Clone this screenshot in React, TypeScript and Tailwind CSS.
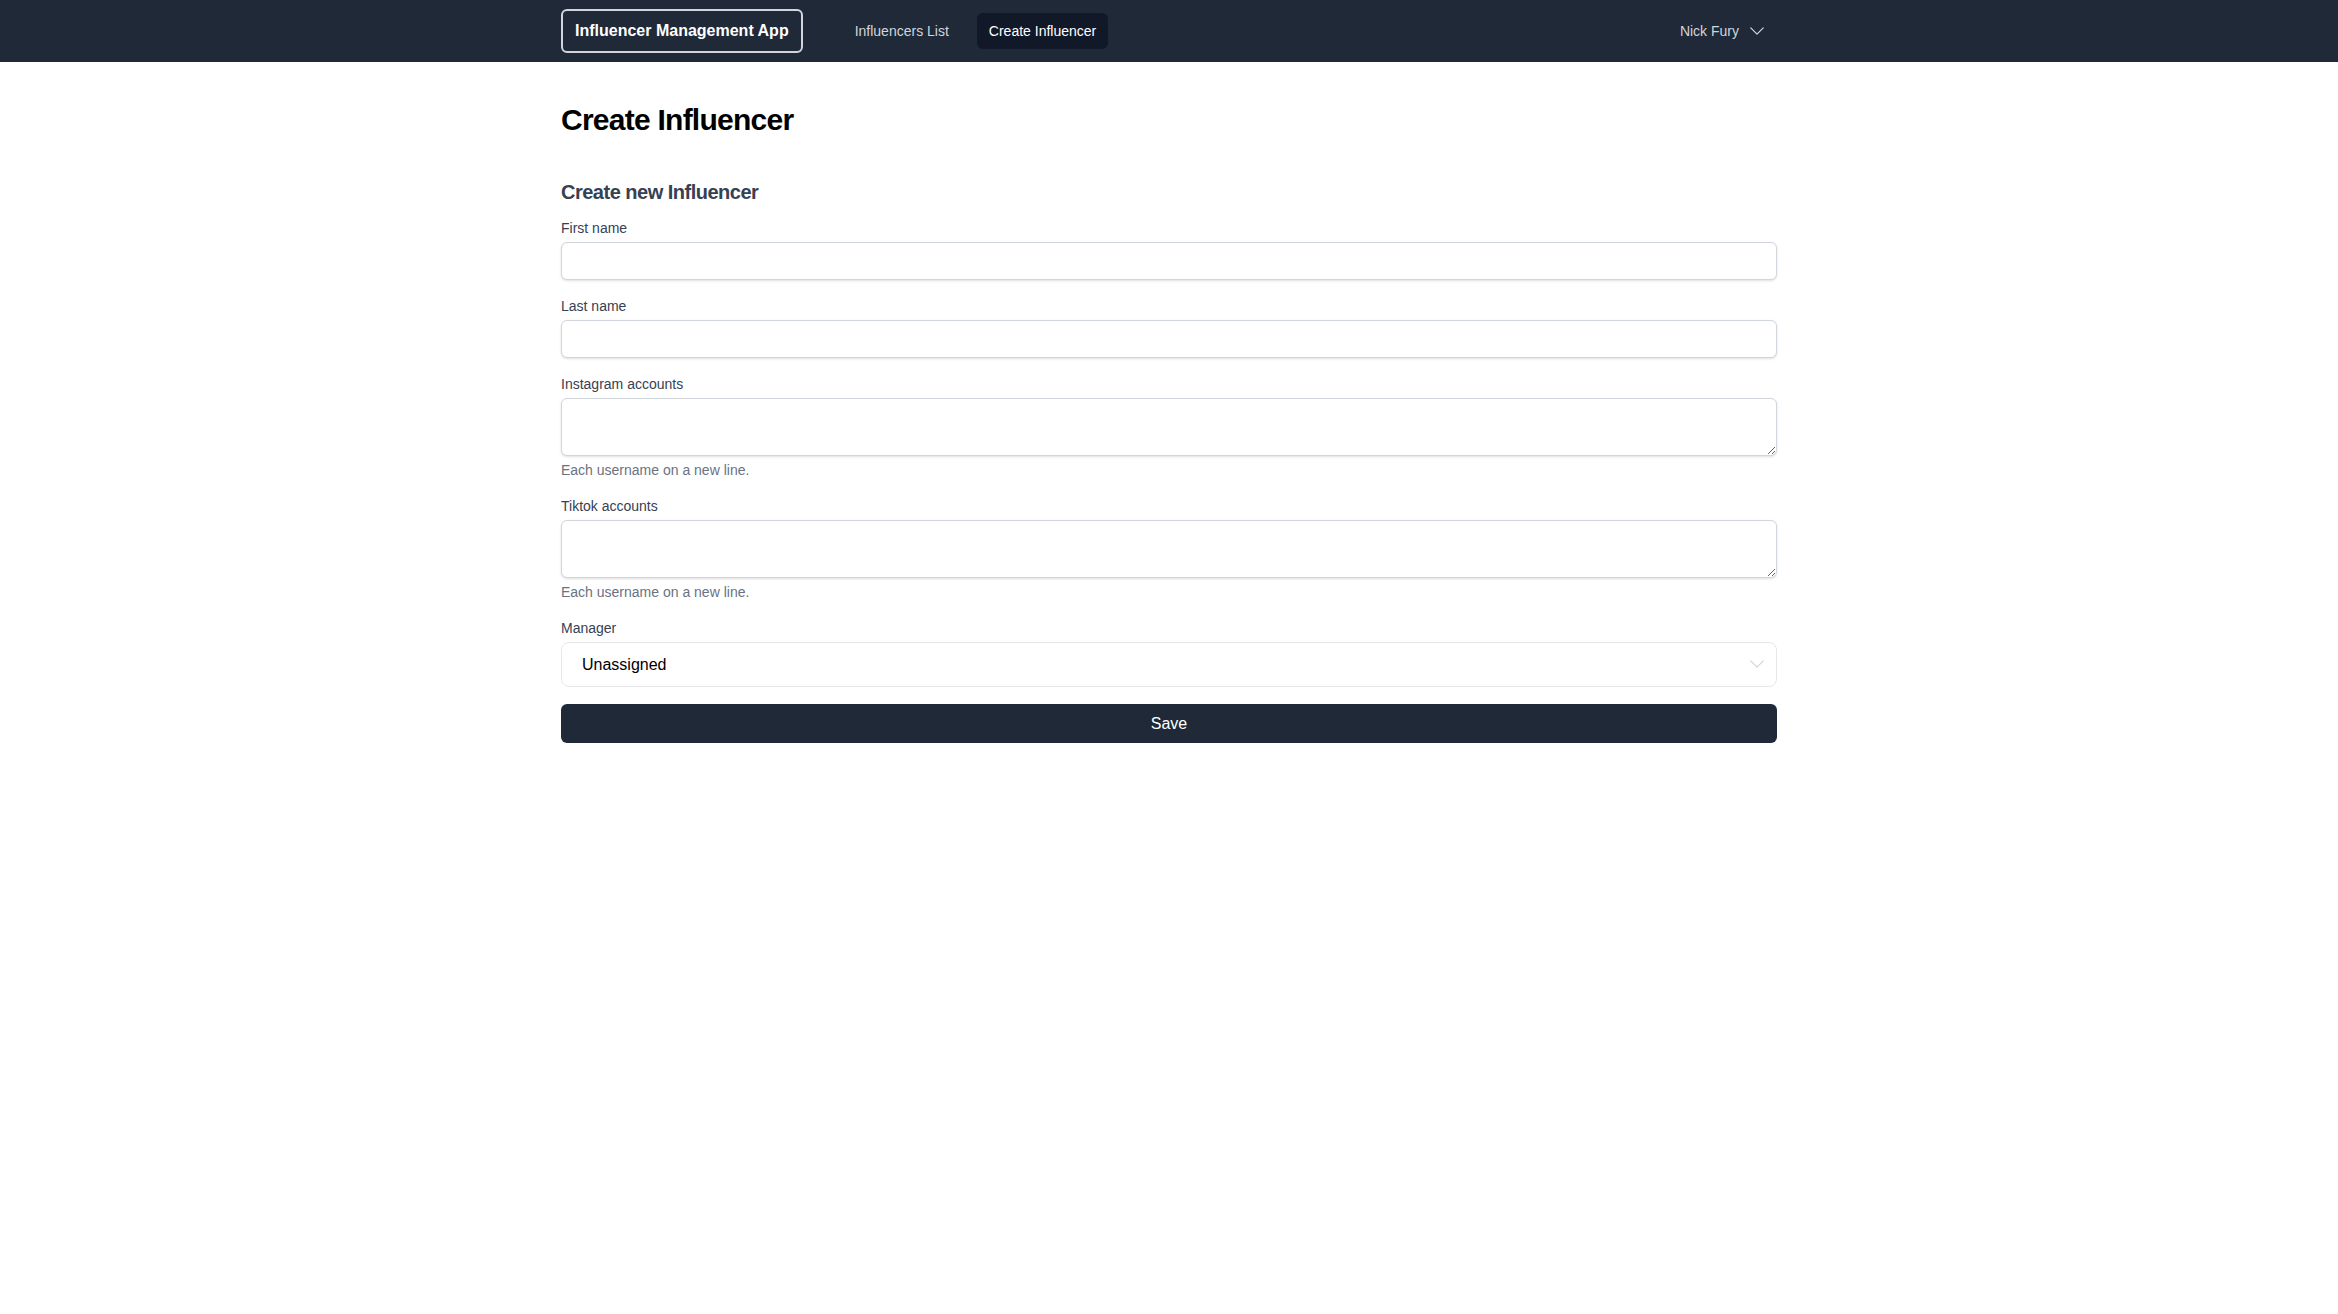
import React from 'react';

const font = { fontFamily: '"Liberation Sans", Arial, Helvetica, sans-serif' };

const ChevronDown = ({ className }: { className?: string }) => (
  <svg viewBox="0 0 24 24" fill="none" stroke="currentColor" strokeWidth={1.5} className={className}>
    <path strokeLinecap="round" strokeLinejoin="round" d="m19.5 8.25-7.5 7.5-7.5-7.5" />
  </svg>
);

const Navbar = () => (
  <nav className="bg-[#1f2937] h-[62px]">
    <div className="max-w-7xl mx-auto px-8 h-full flex items-center justify-between">
      <div className="flex items-center">
        <div className="border-2 border-gray-300 rounded-md px-3 py-2 text-white font-bold text-base">
          Influencer Management App
        </div>
        <div className="flex items-center ml-10 gap-4">
          <a className="px-3 py-2 rounded-md text-sm text-gray-300">Influencers List</a>
          <a className="px-3 py-2 rounded-md text-sm text-white bg-[#111827]">Create Influencer</a>
        </div>
      </div>
      <button className="flex items-center pr-2.5 text-sm text-gray-300">
        Nick Fury
        <ChevronDown className="w-5 h-5 ml-2 text-gray-300" />
      </button>
    </div>
  </nav>
);

const Label = ({ children }: { children: React.ReactNode }) => (
  <label className="block text-sm text-gray-700">{children}</label>
);

const TextInput = () => (
  <input type="text" className="mt-1 block w-full h-[38px] px-3 py-2 text-sm border border-gray-300 rounded-md shadow-sm bg-white" />
);

const TextArea = () => (
  <textarea rows={2} className="mt-1 block w-full h-[58px] px-3 py-2 text-sm border border-gray-300 rounded-md shadow-sm bg-white" />
);

const Hint = () => <p className="mt-1 text-sm text-gray-500">Each username on a new line.</p>;

export default function App() {
  return (
    <div className="min-h-screen bg-white" style={font}>
      <Navbar />
      <main className="max-w-7xl mx-auto px-8 pt-10">
        <h1 className="text-3xl font-bold tracking-tight text-black">Create Influencer</h1>
        <h2 className="mt-10 text-xl font-bold tracking-tight text-gray-700">Create new Influencer</h2>
        <form className="mt-3" onSubmit={(e) => e.preventDefault()}>
          <div>
            <Label>First name</Label>
            <TextInput />
          </div>
          <div className="mt-4">
            <Label>Last name</Label>
            <TextInput />
          </div>
          <div className="mt-4">
            <Label>Instagram accounts</Label>
            <TextArea />
            <Hint />
          </div>
          <div className="mt-4">
            <Label>Tiktok accounts</Label>
            <TextArea />
            <Hint />
          </div>
          <div className="mt-4">
            <Label>Manager</Label>
            <div className="relative mt-1">
              <select className="appearance-none block w-full h-[45px] pl-5 pr-10 text-base text-black border border-gray-200 rounded-lg bg-white">
                <option>Unassigned</option>
              </select>
              <ChevronDown className="pointer-events-none absolute right-2.5 top-[12px] w-5 h-5 text-gray-300" />
            </div>
          </div>
          <button type="submit" className="mt-[17px] w-full h-[39px] rounded-md bg-[#1f2937] text-white text-base">
            Save
          </button>
        </form>
      </main>
    </div>
  );
}
